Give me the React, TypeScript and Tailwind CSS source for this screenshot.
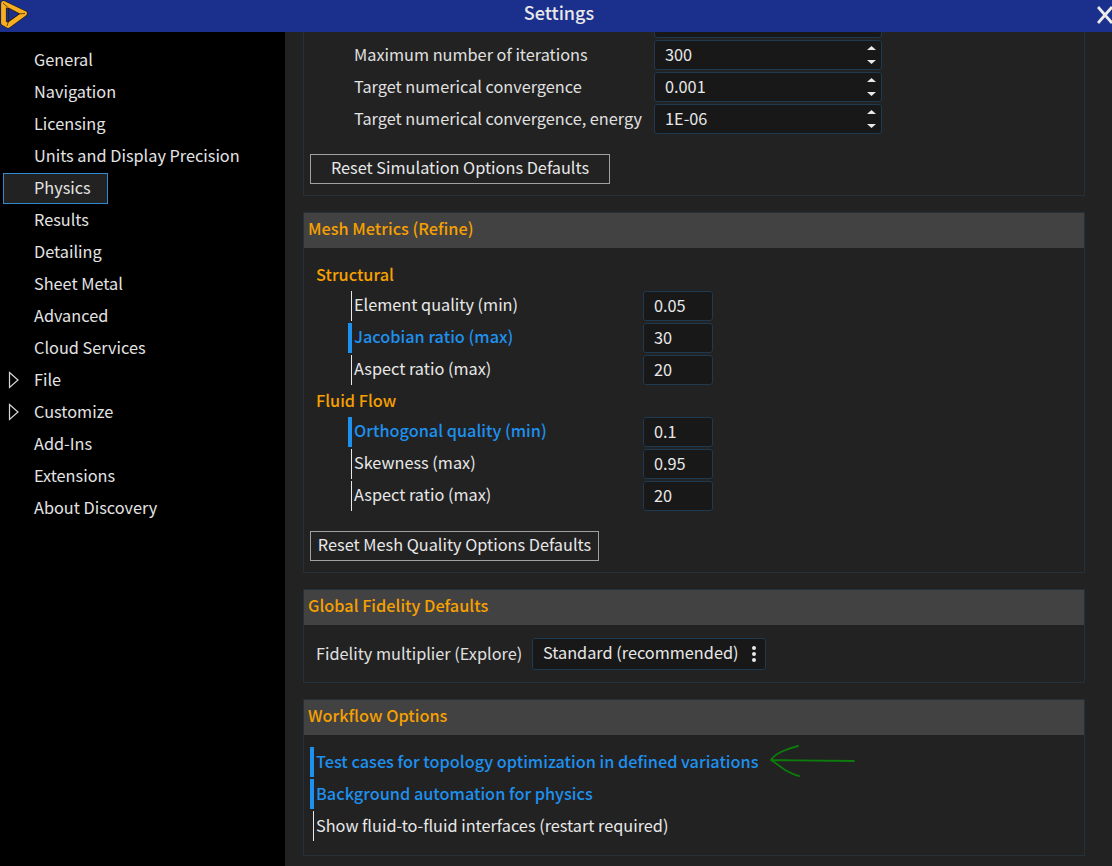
const navItems = [
  "General",
  "Navigation",
  "Licensing",
  "Units and Display Precision",
  "Physics",
  "Results",
  "Detailing",
  "Sheet Metal",
  "Advanced",
  "Cloud Services",
  "File",
  "Customize",
  "Add-Ins",
  "Extensions",
  "About Discovery",
];

function Logo() {
  return (
    <svg width="28" height="29" viewBox="0 0 28 29" className="shrink-0">
      <path
        d="M3.5 3.5 L24.5 13.5 L8 25.5 L3.5 23 Z"
        fill="none"
        stroke="#2a1d05"
        strokeWidth="6"
        strokeLinejoin="round"
      />
      <path
        d="M3.5 3.5 L24.5 13.5 L8 25.5 L3.5 23 Z"
        fill="none"
        stroke="#f7ae22"
        strokeWidth="4.8"
        strokeLinejoin="round"
      />
      <path d="M8.5 8 L19.5 13.8 L8.5 21.5 Z" fill="#1b2f8c" stroke="#2a1d05" strokeWidth="0.8" />
      <path d="M3 3 L8.5 8 M25 13.5 L19.5 13.8 M7 26 L8.5 21.5" fill="none" stroke="#2a1d05" strokeWidth="0.7" />
    </svg>
  );
}

function NavItem({ label }: { label: string }) {
  const selected = label === "Physics";
  const expandable = label === "File" || label === "Customize";
  return (
    <div className="relative h-8 flex items-center">
      {selected && (
        <div className="absolute left-[3px] top-[1px] w-[105px] h-[31px] bg-[#222222] border border-[#2f8ad0]" />
      )}
      {expandable && (
        <svg width="12" height="18" viewBox="0 0 12 18" className="absolute left-[8px] top-[7px]">
          <path d="M1.5 1.5 L10 9 L1.5 16.5 Z" fill="none" stroke="#d8d8d8" strokeWidth="1.2" />
        </svg>
      )}
      <span className="relative pl-[34px] pb-[2px] text-[#e4e4e4]">{label}</span>
    </div>
  );
}

function SpinRow({ label, value }: { label: string; value: string }) {
  return (
    <div className="h-8 flex items-center">
      <span className="w-[350px] shrink-0 pl-[50px] pb-[2px] text-[#e0e0e0] whitespace-nowrap">{label}</span>
      <div className="w-[228px] h-[30px] flex items-center justify-between pl-[10px] pr-[5px] bg-[#181818] border border-[#1f3a50] rounded-[3px] text-[#e8e8e8]">
        <span className="pb-[2px]">{value}</span>
        <span className="flex flex-col gap-[10px]">
          <svg width="9" height="4" viewBox="0 0 9 4" className="block">
            <path d="M4.5 0 L9 4 L0 4 Z" fill="#e8e8e8" />
          </svg>
          <svg width="9" height="4" viewBox="0 0 9 4" className="block">
            <path d="M0 0 L9 0 L4.5 4 Z" fill="#e8e8e8" />
          </svg>
        </span>
      </div>
    </div>
  );
}

function MetricRow({ label, value, changed }: { label: string; value: string; changed?: boolean }) {
  return (
    <div className="h-8 flex items-center">
      <div className={`h-[30px] w-1 ml-[44px] shrink-0 flex justify-end ${changed ? "bg-[#1e90ee]" : ""}`}>
        {!changed && <div className="w-px h-full bg-[#e8e8e8]" />}
      </div>
      <span className={`w-[291px] shrink-0 pl-[2px] pb-[4px] whitespace-nowrap ${changed ? "text-[#1e90ee] font-medium" : "text-[#e8e8e8]"}`}>
        {label}
      </span>
      <div className="w-[70px] h-[30px] flex items-center pl-[10px] pb-[2px] bg-[#181818] border border-[#1f3a50] rounded-[3px] text-[#e8e8e8]">
        {value}
      </div>
    </div>
  );
}

function WorkflowRow({ label, changed }: { label: string; changed?: boolean }) {
  return (
    <div className="h-8 flex items-center pl-[6px]">
      <div className={`h-[30px] w-1 shrink-0 flex justify-end ${changed ? "bg-[#1e90ee]" : ""}`}>
        {!changed && <div className="w-px h-full bg-[#e8e8e8]" />}
      </div>
      <span className={`pl-[2px] pb-[2px] whitespace-nowrap ${changed ? "text-[#1e90ee] font-medium" : "text-[#e8e8e8]"}`}>
        {label}
      </span>
    </div>
  );
}

function SectionHeader({ title }: { title: string }) {
  return (
    <div className="h-[35px] flex items-center pl-[4px] pb-[5px] bg-[#424242] text-[#f5a000] font-medium">{title}</div>
  );
}

export default function App() {
  return (
    <div className="w-[1112px] h-[866px] flex flex-col overflow-hidden bg-[#222222] text-[16.3px] font-['Noto_Sans_CJK_SC','Noto_Sans',sans-serif]">
      {/* Title bar */}
      <header className="relative h-8 shrink-0 flex items-center justify-center bg-[#1b2f8c]">
        <div className="absolute left-0 top-0">
          <Logo />
        </div>
        <span className="ml-[6px] pb-[8px] text-[18px] font-medium text-[#e8e8e8]">Settings</span>
        <svg width="16" height="18" viewBox="0 0 16 18" className="absolute left-[1097px] top-[6px]">
          <path d="M1 1 L15 17 M15 1 L1 17" fill="none" stroke="#ececec" strokeWidth="2.8" />
        </svg>
      </header>

      <div className="flex-1 flex min-h-0">
        {/* Sidebar */}
        <nav className="w-[285px] shrink-0 pt-3 bg-black">
          {navItems.map((item) => (
            <NavItem key={item} label={item} />
          ))}
        </nav>

        {/* Content */}
        <main className="flex-1 min-w-0 overflow-hidden pl-[18px]">
          <div className="w-[782px] -mt-[26px] flex flex-col gap-4">
            <section className="border border-[#24313a] pb-[11px]">
              <SpinRow label="" value="" />
              <SpinRow label="Maximum number of iterations" value="300" />
              <SpinRow label="Target numerical convergence" value="0.001" />
              <SpinRow label="Target numerical convergence, energy" value="1E-06" />
              <div className="mt-[19px] ml-[6px] w-[300px] h-[30px] pb-[4px] flex items-center justify-center border border-[#a0a0a0] text-[#e8e8e8]">
                Reset Simulation Options Defaults
              </div>
            </section>

            <section className="border border-[#24313a] pb-[11px]">
              <SectionHeader title="Mesh Metrics (Refine)" />
              <div className="h-[27px] mt-[15px] pb-[4px] flex items-center pl-[12px] text-[#f5a000] font-medium">Structural</div>
              <MetricRow label="Element quality (min)" value="0.05" />
              <MetricRow label="Jacobian ratio (max)" value="30" changed />
              <MetricRow label="Aspect ratio (max)" value="20" />
              <div className="h-[30px] pb-[2px] flex items-center pl-[12px] text-[#f5a000] font-medium">Fluid Flow</div>
              <MetricRow label="Orthogonal quality (min)" value="0.1" changed />
              <MetricRow label="Skewness (max)" value="0.95" />
              <MetricRow label="Aspect ratio (max)" value="20" />
              <div className="mt-[19px] ml-[6px] w-[289px] h-[30px] pb-[4px] flex items-center justify-center border border-[#a0a0a0] text-[#e8e8e8]">
                Reset Mesh Quality Options Defaults
              </div>
            </section>

            <section className="border border-[#24313a] pb-[12px]">
              <SectionHeader title="Global Fidelity Defaults" />
              <div className="mt-[13px] flex items-center pl-[12px]">
                <span className="w-[216px] shrink-0 pb-[2px] text-[#e0e0e0] whitespace-nowrap">Fidelity multiplier (Explore)</span>
                <div className="w-[234px] h-[32px] flex items-center justify-between pl-[10px] pr-[9px] bg-[#181818] border border-[#1f3a50] rounded-[3px] text-[#e8e8e8]">
                  <span className="pb-[4px] whitespace-nowrap">Standard (recommended)</span>
                  <span className="flex flex-col gap-[2px]">
                    <span className="w-1 h-1 rounded-full bg-[#e8e8e8]" />
                    <span className="w-1 h-1 rounded-full bg-[#e8e8e8]" />
                    <span className="w-1 h-1 rounded-full bg-[#e8e8e8]" />
                  </span>
                </div>
              </div>
            </section>

            <section className="relative border border-[#24313a] pb-[13px]">
              <SectionHeader title="Workflow Options" />
              <div className="mt-[11px]">
                <WorkflowRow label="Test cases for topology optimization in defined variations" changed />
                <WorkflowRow label="Background automation for physics" changed />
                <WorkflowRow label="Show fluid-to-fluid interfaces (restart required)" />
              </div>
              {/* hand-drawn annotation */}
              <svg width="90" height="36" viewBox="0 0 90 36" className="absolute left-[465px] top-[43px]">
                <path
                  d="M85 18 C60 17.5 30 17.5 2 17 M2 17 C5 13 9 10 13 8.5 C18 6.5 24 4 29 3 M2 17 C8 21 12 24 16 27 C20 29 25 32 30 33"
                  fill="none"
                  stroke="#0c7c0c"
                  strokeWidth="1.8"
                  strokeLinecap="round"
                />
              </svg>
            </section>
          </div>
        </main>
      </div>
    </div>
  );
}
